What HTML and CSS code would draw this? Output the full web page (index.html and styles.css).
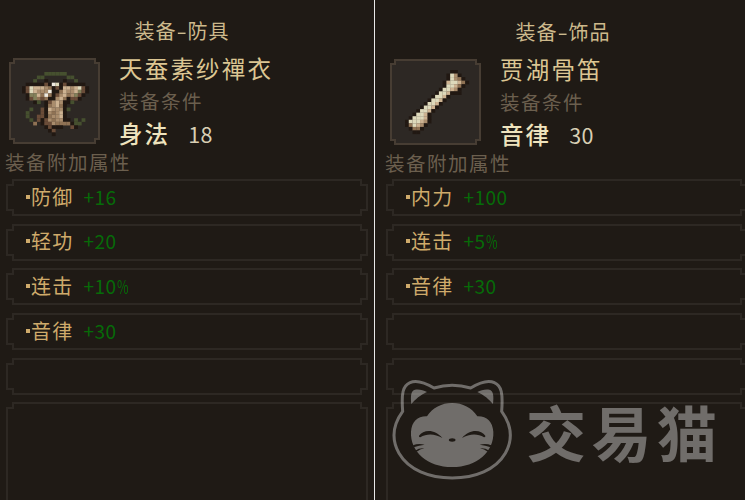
FILE: index.html
```
<!DOCTYPE html>
<html lang="zh-CN">
<head>
<meta charset="UTF-8">
<title>装备</title>
<link rel="stylesheet" href="styles.css">
</head>
<body>

<div class="compare">
  <section class="panel">
    <h1 class="title">装备<span class="dash">-</span>防具</h1>
    <div class="item">
      <div class="icon"><svg class="sprite robe" data-sprite="robe"></svg></div>
      <div class="info">
        <div class="name">天蚕素纱禪衣</div>
        <div class="label">装备条件</div>
        <div class="need">身法<span class="need-num">18</span></div>
      </div>
    </div>
    <div class="label attr-label">装备附加属性</div>
    <div class="attrs">
      <div class="attr"><i class="dot"></i>防御<span class="val">+16</span></div>
      <div class="attr"><i class="dot"></i>轻功<span class="val">+20</span></div>
      <div class="attr"><i class="dot"></i>连击<span class="val">+10<span class="pct">%</span></span></div>
      <div class="attr"><i class="dot"></i>音律<span class="val">+30</span></div>
      <div class="attr"></div>
      <div class="attr desc"></div>
    </div>
  </section>

  <section class="panel panel-right">
    <h1 class="title">装备<span class="dash">-</span>饰品</h1>
    <div class="item">
      <div class="icon"><svg class="sprite bone" data-sprite="bone"></svg></div>
      <div class="info">
        <div class="name">贾湖骨笛</div>
        <div class="label">装备条件</div>
        <div class="need">音律<span class="need-num">30</span></div>
      </div>
    </div>
    <div class="label attr-label">装备附加属性</div>
    <div class="attrs">
      <div class="attr"><i class="dot"></i>内力<span class="val">+100</span></div>
      <div class="attr"><i class="dot"></i>连击<span class="val">+5<span class="pct">%</span></span></div>
      <div class="attr"><i class="dot"></i>音律<span class="val">+30</span></div>
      <div class="attr"></div>
      <div class="attr"></div>
      <div class="attr desc"></div>
    </div>
  </section>
</div>

<div class="watermark">
  <svg class="cat" viewBox="0 0 405 360">
    <mask id="face">
      <rect width="405" height="360" fill="#fff"/>
      <g id="eye">
        <path d="M102 197C115 178 150 176 172 204C150 191 125 190 106 202Q101 202 102 197z"/>
        <path d="M84 226Q100 219 119 224Q102 226 86 232z"/>
        <path d="M90 242Q104 233 118 235Q105 238 95 245z"/>
      </g>
      <use href="#eye" transform="matrix(-1 0 0 1 403 0)"/>
      <ellipse cx="201.500" cy="210" rx="10" ry="5"/>
    </mask>
    <path class="cat-line" d="M147 54Q201 38 257 54C288 35 312 30 328 38C350 48 354 70 350 124C382 168 382 212 361 250C332 300 270 324 201.500 324C133 324 71 300 42 250C21 212 21 168 53 124C49 70 53 48 75 38C91 30 115 35 147 54z"/>
    <path d="M79 102C76 78 78 61 90 59C104 57 115 61 126 66C105 75 92 88 79 102z"/>
    <path d="M324 102C327 78 325 61 313 59C299 57 288 61 277 66C298 75 311 88 324 102z"/>
    <path mask="url(#face)" d="M126 139C143 113 170 99 201.500 99C233 99 260 113 277 139C305 138 323 155 325 185C328 245 275 291 201.500 291C128 291 75 245 78 185C80 155 98 138 126 139z"/>
  </svg>
  <span class="brand">交易猫</span>
</div>

<script src="sprites.js"></script>
</body>
</html>
```
FILE: styles.css
```
body {
  margin: 0;
  height: 500px;
  overflow: hidden;
  background-color: #1f1a15;
  color: #d5c08f;
  font-family: "Noto Sans CJK SC", sans-serif;
}

.compare {
  display: flex;
  height: 500px;
}

.panel {
  box-sizing: border-box;
  flex: none;
  width: 375px;
  height: 500px;
  padding: 15px 7px 0 6px;
  border-right: 1px solid #e8e8e8;
  overflow: hidden;
}

.panel-right {
  width: 381px;
  padding: 16px 7px 0 11px;
  border-right: none;
}

.title {
  margin: 0;
  padding-right: 9px;
  text-align: center;
  font-size: 20px;
  font-weight: 400;
  line-height: 31px;
  letter-spacing: 1px;
  color: #cdb98c;
}

.dash {
  display: inline-block;
  width: 11px;
  text-align: center;
  transform: scaleX(1.5);
}

.item {
  display: flex;
  gap: 19px;
  height: 86px;
  margin-top: 12px;
  padding-left: 3px;
}

.panel-right .item {
  padding-left: 4px;
}

/* notched pixel corners */
.icon {
  box-sizing: border-box;
  width: 91px;
  height: 86px;
  display: flex;
  align-items: center;
  justify-content: center;
  border: 8px solid transparent;
  border-image: url("data:image/svg+xml,%3Csvg xmlns='http://www.w3.org/2000/svg' width='24' height='24'%3E%3Cpath d='M5 1H19V5H23V19H19V23H5V19H1V5H5z' fill='%232d2824' stroke='%23473d33' stroke-width='2'/%3E%3C/svg%3E") 8 fill;
}

.sprite {
  flex: none;
  overflow: visible;
}

.robe {
  width: 67px;
  height: 64px;
  margin: 5px 0 0 1px;
}

.bone {
  width: 64px;
  height: 64px;
  margin: 0 0 0 3px;
}

.info {
  margin-top: -6px;
  white-space: nowrap;
}

.name {
  font-size: 23.5px;
  line-height: 32px;
  letter-spacing: 2.2px;
  color: #dcc693;
}

.label {
  font-size: 19.5px;
  line-height: 33px;
  letter-spacing: 1.5px;
  color: #6b5f4e;
}

.need {
  font-size: 23.5px;
  font-weight: 500;
  line-height: 32px;
  letter-spacing: 2.1px;
  color: #eee3bd;
}

.need-num {
  margin-left: 18px;
  font-size: 21.5px;
  font-weight: 400;
  letter-spacing: 0.4px;
  color: #d8cfb4;
}

.attr-label {
  line-height: 22px;
  margin: 7px 0 0 -1px;
}

.attrs {
  display: flex;
  flex-direction: column;
  gap: 7.7px;
  margin-top: 6px;
}

.panel-right .attrs {
  margin-top: 5px;
}

.attr {
  box-sizing: border-box;
  flex: none;
  display: flex;
  align-items: center;
  width: 362px;
  height: 37px;
  padding: 0 0 2px 11px;
  border: 8px solid transparent;
  border-image: url("data:image/svg+xml,%3Csvg xmlns='http://www.w3.org/2000/svg' width='24' height='24'%3E%3Cpath d='M7 1H17V6H23V18H17V23H7V18H1V6H7z' fill='none' stroke='%232d2823' stroke-width='2'/%3E%3C/svg%3E") 8;
  font-size: 20px;
  line-height: 20px;
  letter-spacing: 1.2px;
  color: #cfab6b;
}

.desc {
  height: 130px;
}

.dot {
  width: 4px;
  height: 4px;
  margin: 0 1px 0 1px;
  background-color: #cfab6b;
}

.val {
  margin-left: 10px;
  font-size: 19px;
  letter-spacing: 0.5px;
  color: #066b08;
}

.pct {
  display: inline-block;
  transform: scaleX(0.66);
  transform-origin: left;
}

.watermark {
  position: absolute;
  left: 385px;
  top: 370px;
  display: flex;
  opacity: 0.36;
  color: #fff;
}

.cat {
  width: 135px;
  height: 120px;
  fill: #fff;
}

.cat mask path,
.cat mask ellipse {
  fill: #000;
}

.cat .cat-line {
  fill: none;
  stroke: #fff;
  stroke-width: 9;
}

.brand {
  margin-left: 6px;
  font-size: 60px;
  font-weight: 700;
  line-height: 122px;
  letter-spacing: 5.5px;
}
```
FILE: sprites.js
```
const palette = {
  d: '#211812',
  b: '#6a4c38',
  n: '#8f7254',
  t: '#a98c6c',
  l: '#cdb291',
  c: '#ded9bb',
  w: '#eee9df',
  o: '#83805a',
  g: '#46502f'
};

const sprites = {
  robe: [
    '......gggggg......',
    '....gg......gg....',
    '...g..d....d..g...',
    '.dddddbdwcdbddddd.',
    'dbcllltndbdlltlcbd',
    'dbcltttwddnlttlobd',
    '.doolnwndbtlntobd.',
    '.dbonbnddtlndbbd..',
    '...dg.dbtltddg....',
    '......dntlnd......',
    '..g..bdltttdg.....',
    '.g...bdtntld......',
    '.g..bbdnttld......',
    '..g.bdbtnttdd.g.g.',
    '...n.dbbtnnnndgg..',
    '......dbddd..bd...',
    '.......db.........',
    '........d.........'
  ],
  bone: [
    '............dd...',
    '...........dctd..',
    '...........dctnd.',
    '..........dlcclnd',
    '..........dcclnd.',
    '.........dccltd..',
    '........dcclddd..',
    '.......dccld.....',
    '......dccld......',
    '.....dccld.......',
    '....dccld........',
    '...dccld.........',
    '..dccld..........',
    '.dcccld..........',
    'dcccltd..........',
    'dncltd...........',
    '.dnnd............',
    '..dd.............'
  ]
};

document.querySelectorAll('.sprite').forEach(svg => {
  const rows = sprites[svg.dataset.sprite];
  svg.setAttribute('viewBox', `0 0 ${rows[0].length} ${rows.length}`);
  svg.setAttribute('preserveAspectRatio', 'none');
  let cells = '';
  rows.forEach((row, y) => {
    [...row].forEach((key, x) => {
      if (key === '.') return;
      cells += `<rect x="${x}" y="${y}" width="1.03" height="1.03" fill="${palette[key]}"/>`;
    });
  });
  svg.innerHTML = cells;
});
```
